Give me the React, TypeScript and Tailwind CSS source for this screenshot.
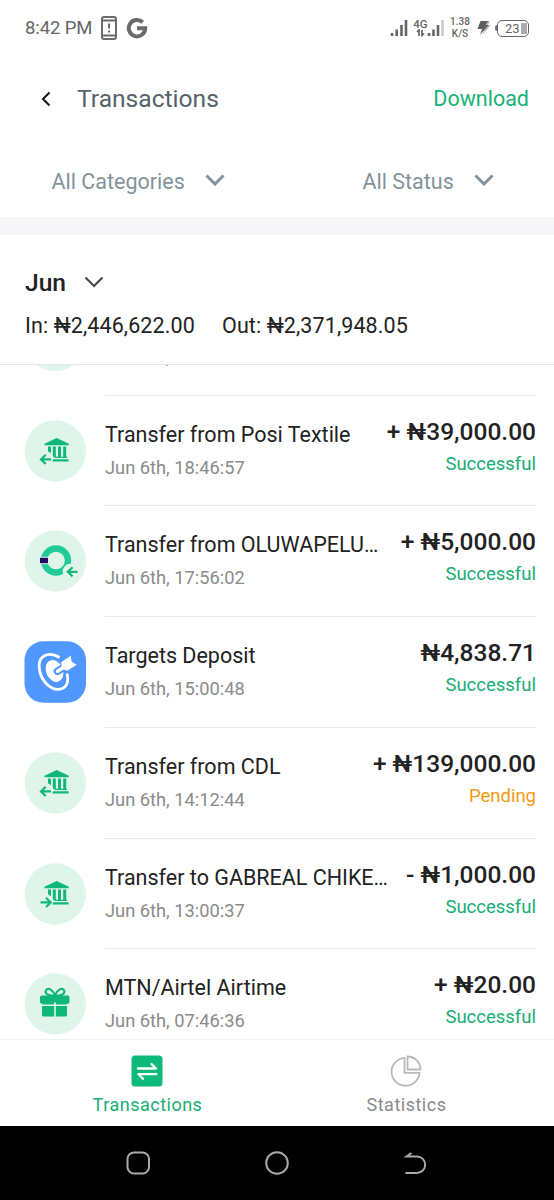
import type { ReactNode } from "react";
import clsx from "clsx";

type IconKind = "bank-in" | "bank-out" | "opay" | "target" | "gift";

interface Transaction {
  icon: IconKind;
  title: string;
  date: string;
  amount: string;
  status: "Successful" | "Pending";
}

const transactions: Transaction[] = [
  { icon: "bank-in", title: "Transfer from Posi Textile", date: "Jun 6th, 18:46:57", amount: "+ ₦39,000.00", status: "Successful" },
  { icon: "opay", title: "Transfer from OLUWAPELU…", date: "Jun 6th, 17:56:02", amount: "+ ₦5,000.00", status: "Successful" },
  { icon: "target", title: "Targets Deposit", date: "Jun 6th, 15:00:48", amount: "₦4,838.71", status: "Successful" },
  { icon: "bank-in", title: "Transfer from CDL", date: "Jun 6th, 14:12:44", amount: "+ ₦139,000.00", status: "Pending" },
  { icon: "bank-out", title: "Transfer to GABREAL CHIKE…", date: "Jun 6th, 13:00:37", amount: "- ₦1,000.00", status: "Successful" },
  { icon: "gift", title: "MTN/Airtel Airtime", date: "Jun 6th, 07:46:36", amount: "+ ₦20.00", status: "Successful" },
];

function Bank({ outgoing }: { outgoing?: boolean }) {
  return (
    <g fill="#0fb879">
      <path d="M20.500 25.200v-1.400L32.700 18l12.100 5.800v1.400z" />
      <path d="M24 26.500h3v6.700l-3-2zM28.800 26.500h3v11h-2.200l-.8-2.500zM34 26.500h3v11h-3zM39.200 26.500h3v11h-3z" />
      <path d="M31 36.800h12v1.200H31zM29.200 39.200h15.400v2.200H28.200z" />
      <path
        d={outgoing ? "M16.500 39.400h10M22 34.800l4.700 4.600-4.700 4.600" : "M27 39.400H17.500M21.700 34.800L17 39.400l4.700 4.600"}
        fill="none"
        stroke="#0fb879"
        strokeWidth="2.200"
      />
    </g>
  );
}

function RowIcon({ kind }: { kind: IconKind }) {
  return (
    <svg viewBox="0 0 62 62" className="size-[62px] shrink-0">
      {kind === "target" ? (
        <rect x=".5" y=".3" width="61.500" height="61.500" rx="19" fill="#5097ff" />
      ) : (
        <circle cx="31.300" cy="31" r="30.700" fill="#dff5ea" />
      )}
      {kind === "bank-in" && <Bank />}
      {kind === "bank-out" && <Bank outgoing />}
      {kind === "opay" && (
        <>
          <circle cx="32" cy="30.500" r="12" fill="none" stroke="#20cb98" strokeWidth="6.400" />
          <circle cx="46.500" cy="41.500" r="7.800" fill="#dff5ea" />
          <path d="M15 26.800h9.500v7.400H15z" fill="#dff5ea" />
          <path d="M16 27.800h8v5.400h-8z" fill="#210d68" />
          <path d="M53.500 41.800H44M48.500 37.200l-4.700 4.600 4.700 4.600" fill="none" stroke="#14b67a" strokeWidth="2.200" />
        </>
      )}
      {kind === "target" && (
        <g fill="none" stroke="#fff">
          <path d="M35.500 16.500C23.500 9.500 14.200 15.500 15.200 26.500C16.200 39 26.500 50 36 48.200C43 47 45 40 43 32.500" strokeWidth="2.800" />
          <ellipse cx="30.500" cy="30" rx="8.300" ry="11.300" transform="rotate(-24 30.500 30)" fill="#fff" stroke="none" />
          <path d="M33.500 30.300L42 25" stroke="#5097ff" strokeWidth="7.600" strokeLinecap="round" />
          <path d="M33.500 30.300L44 23.500" strokeWidth="3.400" strokeLinecap="round" />
          <path d="M37.500 25.500L37.300 21.300L46.700 14.800L47.600 20.800L52.800 23.800L43.200 29.700L39 28.200z" fill="#fff" stroke="none" />
        </g>
      )}
      {kind === "gift" && (
        <g fill="#0fb879">
          <path d="M18 22.500h26q1.500 0 1.500 1.500v5q0 1.200-1.200 1.500l-2 1H32v-2h-2v2H19l-1.800-1q-1.200-.5-1.200-1.500v-5q0-1.500 2-1.500z" />
          <path d="M18 33h12.200v10.500H19.500q-1.500 0-1.500-1.500zM31.800 33H43v9q0 1.500-1.500 1.500h-9.700z" />
          <path
            d="M31 23C29 16.500 23 13.500 21.700 18C21 21.500 26 23 31 23C36 23 41 21.500 40.300 18C39 13.500 33 16.500 31 23z"
            fill="none"
            stroke="#0fb879"
            strokeWidth="2.200"
          />
        </g>
      )}
    </svg>
  );
}

function TransactionRow({ icon, title, date, amount, status }: Transaction) {
  return (
    <div className="flex h-[110.750px] shrink-0 pr-[18px] pl-6">
      <div className="pt-[25px]">
        <RowIcon kind={icon} />
      </div>
      <div className="ml-[19px] flex grow justify-between border-t border-[#e9e9e9] pt-[22px] whitespace-nowrap">
        <div>
          <p className="pt-[3px] text-[21.500px] leading-[28px] text-[#222]">{title}</p>
          <p className="mt-[7px] text-[18.300px] leading-[24px] text-[#8b8b8b]">{date}</p>
        </div>
        <div className="text-right">
          <p className="text-[24.500px] leading-[28px] font-medium text-[#222]">{amount}</p>
          <p
            className={clsx(
              "mt-[6px] text-[18.500px] leading-[24px]",
              status === "Pending" ? "text-[#f39a15]" : "text-[#18ad76]",
            )}
          >
            {status}
          </p>
        </div>
      </div>
    </div>
  );
}

function Chevron({ className, width }: { className?: string; width: number }) {
  return (
    <svg viewBox="0 0 20 12" className={clsx("h-3 w-5", className)} fill="none" stroke="currentColor" strokeWidth={width}>
      <path d="M1.500 1.500L10 10l8.500-8.500" />
    </svg>
  );
}

function StatusBar() {
  return (
    <div className="flex h-[56px] items-center pr-[25px] pl-[25px] text-[#666]">
      <span className="mt-[2px] w-[76px] text-[18.500px] tracking-[-0.100px] whitespace-nowrap">8:42 PM</span>
      <svg viewBox="0 0 16 24" className="h-6 w-4" fill="none" stroke="#6b6b6b" strokeWidth="2">
        <rect x="1" y="1" width="14" height="22" rx="2" />
        <path d="M1 4.500h14M1 19.500h14M8 7.500v5M8 14.500v2" />
      </svg>
      <svg viewBox="0 0 22 22" className="ml-[9px] size-[22px]" fill="none" stroke="#6b6b6b" strokeWidth="4">
        <path d="M16.700 5.300A8.200 8.200 0 1 0 19.200 11.300H11" />
      </svg>
      <div className="grow" />
      <svg viewBox="0 0 18 18" className="h-[18px] w-[18px]" stroke="#666" strokeWidth="2.600">
        <path d="M2 17v-3M6.700 17v-6.500M11.500 17V6M16 17V1" />
      </svg>
      <div className="ml-[6px] flex h-[18px] items-end">
        <div className="flex w-[13px] flex-col items-center">
          <span className="text-[11.500px] leading-[10px] font-medium">4G</span>
          <svg viewBox="0 0 9 8" className="h-[8px] w-[9px]" fill="none" stroke="#666" strokeWidth="1.700">
            <path d="M1 3l2-2v6M6 1v5.500l2-2" />
          </svg>
        </div>
        <svg viewBox="0 0 17 18" className="h-[18px] w-[17px]" stroke="#666" strokeWidth="2.600">
          <path d="M2 17v-3M6.500 17v-6.500M11 17V6" />
          <path d="M15.500 17V1" stroke="#ccc" />
        </svg>
      </div>
      <div className="ml-[6px] flex w-[20px] flex-col items-center text-[10px] leading-[12px] font-medium">
        <span>1.38</span>
        <span>K/S</span>
      </div>
      <svg viewBox="0 0 14 16" className="ml-[7px] h-4 w-[14px]">
        <path d="M9 1h4l-2 4h3L5 15l3-6H6z" fill="#bbb" />
        <path d="M3.500 1H11L8.500 5h3.200L3 15l2-6H.500z" fill="#606060" />
      </svg>
      <div className="ml-[4px] h-[6px] w-[2px] rounded-l bg-[#777]" />
      <div className="flex h-[17px] w-[32px] items-center rounded-[5px] border-[1.500px] border-[#666] pl-[7px] text-[13px] leading-none">
        23
        <span className="ml-px h-[11px] w-[6px] shrink-0 bg-[#aaa]" />
      </div>
    </div>
  );
}

function Tab({ label, active, children }: { label: string; active?: boolean; children: ReactNode }) {
  return (
    <div
      className={clsx(
        "flex w-[259px] flex-col items-center text-[18px] leading-[24px] tracking-[0.500px]",
        active ? "text-[#16ae74]" : "text-[#8b8b8b]",
      )}
    >
      {children}
      <span className="mt-[6px]">{label}</span>
    </div>
  );
}

export default function App() {
  return (
    <div className="flex h-[1200px] w-[554px] flex-col overflow-hidden bg-white font-[Roboto,sans-serif]">
      <StatusBar />

      <header className="flex h-[84px] items-center pr-[25px] pl-[41px]">
        <svg viewBox="0 0 10 16" className="mt-px h-4 w-[10px]" fill="none" stroke="#151515" strokeWidth="2">
          <path d="M8.500 1.500L2 8l6.500 6.500" />
        </svg>
        <h1 className="mt-[2px] ml-[26px] text-[24.600px] text-[#56636a]">Transactions</h1>
        <span className="mt-[2px] ml-auto text-[21.500px] text-[#18b277]">Download</span>
      </header>

      <div className="flex h-[77px] items-center pl-[51.500px] text-[21.500px] text-[#83939b]">
        <span className="mt-[8px] w-[153.500px] whitespace-nowrap">All Categories</span>
        <Chevron width={3} className="mt-[3px]" />
        <span className="mt-[8px] ml-[137.500px] w-[111px] whitespace-nowrap">All Status</span>
        <Chevron width={3} className="mt-[3px]" />
      </div>
      <div className="h-[18px] bg-[#f6f6f9]" />

      <div className="flex h-[130px] flex-col border-b border-[#e3e8e6] pt-[32px] pl-[25px] text-[#222]">
        <div className="flex h-[30px] items-center">
          <span className="mt-[2px] w-[59px] text-[24.600px] font-medium">Jun</span>
          <Chevron width={2} className="-mt-px text-[#444]" />
        </div>
        <div className="mt-[14px] flex text-[21.500px] leading-[30px] tracking-[0.100px] whitespace-nowrap">
          <span className="w-[197px]">In: ₦2,446,622.00</span>
          <span>Out: ₦2,371,948.05</span>
        </div>
      </div>

      <main className="flex h-[674px] flex-col overflow-hidden">
        {/* bottom edge of the row scrolled under the month summary */}
        <div className="flex h-[29.600px] shrink-0 items-start overflow-hidden pl-6">
          <div className="-mt-[56px] size-[62px] rounded-full bg-[#dff5ea]" />
          <span className="ml-[80px] h-px w-[2px] bg-[#aaa]" />
        </div>
        {transactions.map((t) => (
          <TransactionRow key={t.date} {...t} />
        ))}
      </main>

      <nav className="flex h-[87px] justify-center border-t border-[#f0f2f1] pt-[15px]">
        <Tab label="Transactions" active>
          <svg viewBox="0 0 32 32" className="-ml-[2px] size-8" fill="none">
            <rect x=".5" y=".5" width="31" height="31" rx="3.500" fill="#0cbb79" />
            <path d="M7 13.500h18L20.500 9M25.500 19.200h-18l4.500 4.500" stroke="#fff" strokeWidth="2.300" strokeLinecap="round" strokeLinejoin="round" />
          </svg>
        </Tab>
        <Tab label="Statistics">
          <svg viewBox="0 0 32 32" className="-ml-[2px] size-8" fill="none" stroke="#b9b9b9" strokeWidth="1.800">
            <path d="M14.500 2.800A14 14 0 1 0 29.500 17.800H14.500z" />
            <path d="M17.500 1.500A13 13 0 0 1 30.500 14.500H17.500z" />
          </svg>
        </Tab>
      </nav>

      <div className="flex h-[74px] items-center justify-between bg-black pr-[127px] pl-[126px]">
        <svg viewBox="0 0 24 24" className="size-6" fill="none" stroke="#aaa" strokeWidth="2">
          <rect x="1.500" y="1.500" width="21.500" height="21" rx="6.500" />
        </svg>
        <svg viewBox="0 0 24 24" className="size-6" fill="none" stroke="#aaa" strokeWidth="2">
          <circle cx="12" cy="12" r="10.800" />
        </svg>
        <svg viewBox="0 0 24 24" className="size-6" fill="none" stroke="#aaa" strokeWidth="2">
          <path d="M8.500 2L3.500 5.500H14a8.200 8.200 0 0 1 0 16.400H2.500" />
        </svg>
      </div>
    </div>
  );
}
